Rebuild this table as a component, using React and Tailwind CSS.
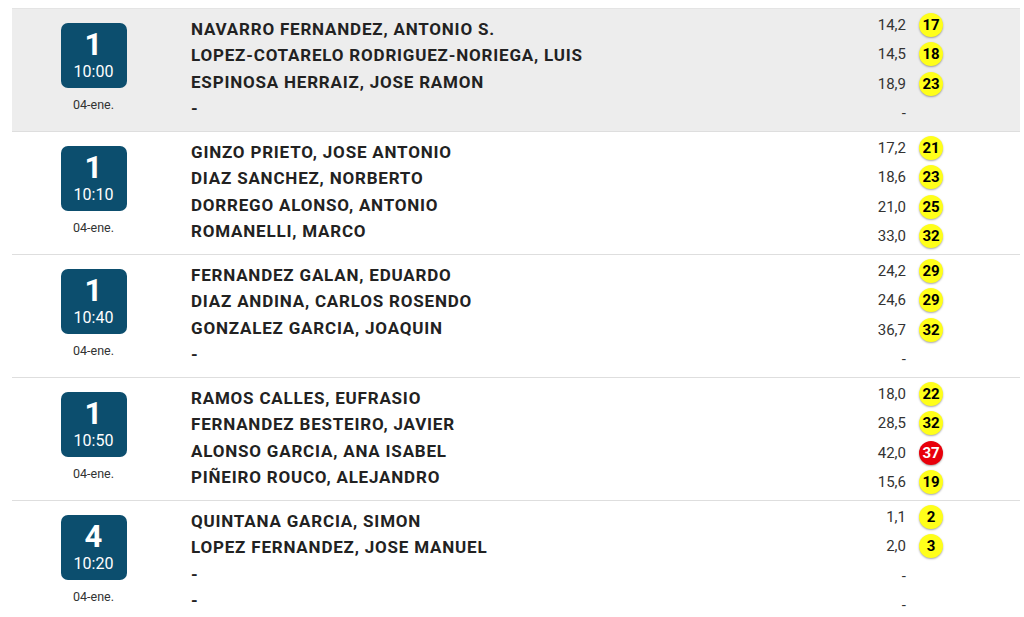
const races = [
  {
    num: "1",
    time: "10:00",
    date: "04-ene.",
    highlight: true,
    players: [
      { name: "NAVARRO FERNANDEZ, ANTONIO S.", hcp: "14,2", badge: "17" },
      { name: "LOPEZ-COTARELO RODRIGUEZ-NORIEGA, LUIS", hcp: "14,5", badge: "18" },
      { name: "ESPINOSA HERRAIZ, JOSE RAMON", hcp: "18,9", badge: "23" },
      { name: "-", hcp: "-" },
    ],
  },
  {
    num: "1",
    time: "10:10",
    date: "04-ene.",
    players: [
      { name: "GINZO PRIETO, JOSE ANTONIO", hcp: "17,2", badge: "21" },
      { name: "DIAZ SANCHEZ, NORBERTO", hcp: "18,6", badge: "23" },
      { name: "DORREGO ALONSO, ANTONIO", hcp: "21,0", badge: "25" },
      { name: "ROMANELLI, MARCO", hcp: "33,0", badge: "32" },
    ],
  },
  {
    num: "1",
    time: "10:40",
    date: "04-ene.",
    players: [
      { name: "FERNANDEZ GALAN, EDUARDO", hcp: "24,2", badge: "29" },
      { name: "DIAZ ANDINA, CARLOS ROSENDO", hcp: "24,6", badge: "29" },
      { name: "GONZALEZ GARCIA, JOAQUIN", hcp: "36,7", badge: "32" },
      { name: "-", hcp: "-" },
    ],
  },
  {
    num: "1",
    time: "10:50",
    date: "04-ene.",
    players: [
      { name: "RAMOS CALLES, EUFRASIO", hcp: "18,0", badge: "22" },
      { name: "FERNANDEZ BESTEIRO, JAVIER", hcp: "28,5", badge: "32" },
      { name: "ALONSO GARCIA, ANA ISABEL", hcp: "42,0", badge: "37", red: true },
      { name: "PIÑEIRO ROUCO, ALEJANDRO", hcp: "15,6", badge: "19" },
    ],
  },
  {
    num: "4",
    time: "10:20",
    date: "04-ene.",
    players: [
      { name: "QUINTANA GARCIA, SIMON", hcp: "1,1", badge: "2" },
      { name: "LOPEZ FERNANDEZ, JOSE MANUEL", hcp: "2,0", badge: "3" },
      { name: "-", hcp: "-" },
      { name: "-", hcp: "-" },
    ],
  },
];

const Badge = ({ value, red }) => (
  <span
    className={`w-6 h-6 rounded-full flex items-center justify-center text-[15px] font-bold shadow-[0_1px_2px_rgba(0,0,0,0.35)] ${
      red ? "bg-[#e8000b] text-white" : "bg-[#ffff1a] text-black"
    }`}
  >
    {value}
  </span>
);

const RaceRow = ({ race }) => (
  <div
    className={`flex h-[123px] border-b border-[#dedede] ${race.highlight ? "bg-[#ededed]" : "bg-white"}`}
  >
    <div className="w-[163px] shrink-0 flex flex-col items-center pt-[14px]">
      <div className="w-[66px] h-[65px] rounded-[7px] bg-[#0c4e6e] flex flex-col items-center text-white">
        <span className="text-[31px] font-bold leading-none mt-[6px]">{race.num}</span>
        <span className="text-[16px] leading-none mt-[4px]">{race.time}</span>
      </div>
      <span className="text-[12.5px] text-[#333] mt-[8px]">{race.date}</span>
    </div>
    <div className="flex-1 pl-4 pt-[7px]">
      {race.players.map((p, i) => (
        <div
          key={i}
          className="h-[26.3px] leading-[26px] text-[17px] tracking-[0.8px] font-bold text-[#222]"
        >
          {p.name}
        </div>
      ))}
    </div>
    <div className="w-[160px] shrink-0 pt-[1px]">
      {race.players.map((p, i) => (
        <div key={i} className="h-[29.5px] flex items-center">
          <span className="w-[46px] text-right text-[15px] text-[#333]">{p.hcp}</span>
          {p.badge ? (
            <span className="ml-[13px]">
              <Badge value={p.badge} red={p.red} />
            </span>
          ) : null}
        </div>
      ))}
    </div>
  </div>
);

export default function App() {
  return (
    <div className="h-[617px] overflow-hidden bg-white font-['Roboto',sans-serif] pt-[8px]">
      <div className="mx-[12px] w-[1008px] border-t border-[#e4e4e4]">
        {races.map((r, i) => (
          <RaceRow key={i} race={r} />
        ))}
      </div>
    </div>
  );
}
